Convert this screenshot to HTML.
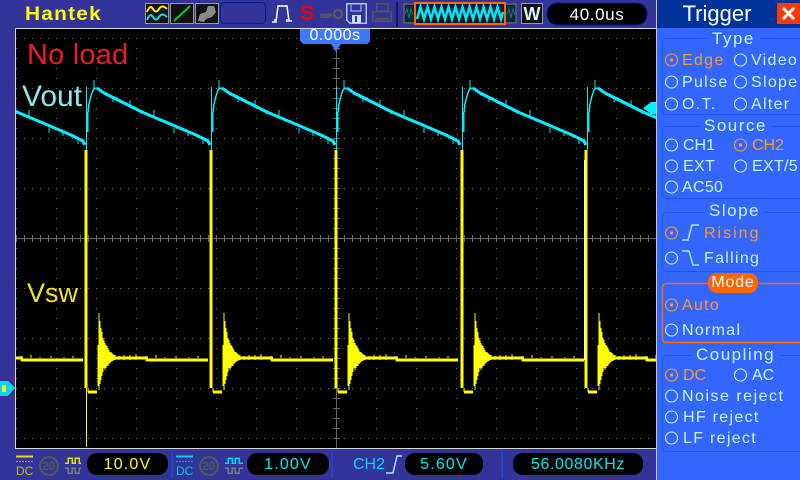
<!DOCTYPE html>
<html><head><meta charset="utf-8"><style>
html,body{margin:0;padding:0;background:#333399}
#r{position:relative;width:800px;height:480px;overflow:hidden;background:#333399;font-family:"Liberation Sans",sans-serif}
svg{position:absolute;left:0;top:0}
.t{position:absolute;white-space:nowrap;line-height:1}
.m{font-size:16px;color:#ccf2ff;letter-spacing:1.3px;margin-top:1px}
.o{color:#ff9a1f}
.l{font-size:17px;color:#ccf2ff;letter-spacing:1.5px;background:#3366ff;padding:0 5px}
.v{font-size:16px;letter-spacing:1.2px;text-align:center}
</style></head><body><div id="r">
<svg width="800" height="480" viewBox="0 0 800 480" shape-rendering="crispEdges">
<defs>
<clipPath id="c"><rect x="16" y="29" width="640" height="419"/></clipPath>
<pattern id="rows" x="16" y="38" width="8" height="50" patternUnits="userSpaceOnUse"><rect width="1" height="1" fill="#707070"/></pattern>
<pattern id="cols" x="16" y="28" width="40" height="10" patternUnits="userSpaceOnUse"><rect width="1" height="1" fill="#707070"/></pattern>
<pattern id="hticks" x="16" y="235" width="8" height="8" patternUnits="userSpaceOnUse"><rect width="1" height="7" fill="#666"/></pattern>
<pattern id="vticks" x="333" y="28" width="8" height="10" patternUnits="userSpaceOnUse"><rect width="7" height="1" fill="#666"/></pattern>
<g id="cy" fill="none" stroke="#00f0ff">
<path stroke-width="1" d="M.5 150V87"/>
<path stroke-width="2" d="M1.500 132V112"/>
<path stroke-width="1.500" d="M2 112L3 104L5 96L7 90L9 88H12"/>
<path stroke-width="3" d="M11 88L18 93L26 97L36 102L46 107L56 112L70 118L82 123L96 129L110 135L122 141L124 145"/>
<path stroke-width="1" d="M8 88V80M27 97V102M31 97V101M44 105V100M55 110V114M68 117V110M88 128V133M102 133V136M117 137V144"/>
</g>
<g id="ye" fill="none" stroke="#ffff00">
<path stroke-width="3" d="M0 150V388"/>
<path stroke-width="3" d="M2 392H11"/>
<path stroke-width="1" d="M2 388V392"/>
<path stroke-width="1" d="M12 386V345M13 390V313M14 384V321M15 380V328"/>
<path stroke-width="1" d="M16 376V332M17 372V338M18 368V340M19 370V343M20 368V345M21 366V346M22 366V348M23 364V350M24 363V352M25 362V352M26 361V353M27 361V354M28 360V355M29 360V355"/>
<path stroke-width="3" d="M29 358H62M60 360H122"/>
<path stroke-width="1" d="M33 356V360M38 355V360M44 355V360M50 354V360M60 356V361M70 355V358M79 357V358M90 356V358M103 357V358M112 356V358"/>
</g>
</defs>
<rect x="16" y="29" width="640" height="419" fill="#000"/>
<rect x="16" y="29" width="640" height="419" fill="url(#rows)"/>
<rect x="16" y="29" width="640" height="419" fill="url(#cols)"/>
<rect x="16" y="238" width="640" height="1" fill="#6c6c6c"/>
<rect x="336" y="29" width="1" height="419" fill="#6c6c6c"/>
<rect x="16" y="235" width="640" height="7" fill="url(#hticks)"/>
<rect x="333" y="29" width="7" height="419" fill="url(#vticks)"/>
<g clip-path="url(#c)">
<use href="#ye" x="-39"/><use href="#ye" x="86"/><use href="#ye" x="211"/><use href="#ye" x="336"/><use href="#ye" x="462"/><use href="#ye" x="586"/>
<path d="M86.500 388V447" stroke="#ffff00" stroke-width="1"/>
<path d="M584.500 160V360" stroke="#fff" stroke-width="1"/>
<use href="#cy" x="-39"/><use href="#cy" x="86"/><use href="#cy" x="211"/><use href="#cy" x="336"/><use href="#cy" x="462"/><use href="#cy" x="587"/>
</g>
<path d="M15.500 28.500H656.500M15.500 28.500V448.500H656.500" fill="none" stroke="#d8d8d8" stroke-width="1"/>
<rect x="656" y="0" width="144" height="480" fill="#3366ff"/>
<rect x="656" y="0" width="1" height="480" fill="#c8c8d8"/>
<rect x="657" y="0" width="143" height="28" fill="#003399"/>
<rect x="777" y="3" width="23" height="21" fill="#ff3a00"/>
<path d="M783 8L794 19M794 8L783 19" stroke="#fff" stroke-width="3" shape-rendering="auto"/>
<path d="M643 108L651 102H656V114H651Z" fill="#00f0ff"/>
<path d="M0 381H8L15 388L8 396H0Z" fill="#00d8f0"/>
<rect x="2" y="385" width="4" height="7" fill="#ffff00"/>
<g fill="none" stroke="#1a5ce0" stroke-width="1" shape-rendering="auto">
<rect x="662.500" y="38.500" width="160" height="76" rx="4"/>
<rect x="662.500" y="126.500" width="160" height="72" rx="4"/>
<rect x="662.500" y="212.500" width="160" height="59" rx="4"/>
<rect x="662.500" y="355.500" width="160" height="96" rx="4"/>
</g>
<rect x="662.500" y="283.500" width="160" height="59" rx="4" fill="none" stroke="#ff6a00" stroke-width="1.400" shape-rendering="auto"/>
<rect x="708" y="273" width="50" height="20" rx="9" fill="#ff6600" shape-rendering="auto"/>
<!-- top bar icons -->
<rect x="145.500" y="3.500" width="23" height="20" fill="#111" stroke="#999"/>
<path d="M147 12Q150 4 153 9T159 9T167 9" fill="none" stroke="#ffee00" stroke-width="2" shape-rendering="auto"/>
<path d="M147 20Q150 12 153 17T159 17T167 17" fill="none" stroke="#00e0ee" stroke-width="2" shape-rendering="auto"/>
<rect x="170.500" y="3.500" width="23" height="20" fill="#111" stroke="#999"/>
<path d="M174 21L190 6" stroke="#00d020" stroke-width="2" shape-rendering="auto"/>
<rect x="195.500" y="3.500" width="23" height="20" fill="#111" stroke="#999"/>
<path d="M198 21L200 14L206 12L208 6L214 6L216 12L212 17L206 19L204 22Z" fill="#8a8a8a" shape-rendering="auto"/>
<rect x="220.500" y="2.500" width="45" height="21" rx="4" fill="#333399" stroke="#0a1a9a" shape-rendering="auto"/>
<path d="M272 22H276L278 6H287L289 21H292M275 19V22M287 19V22" fill="none" stroke="#e8f4ff" stroke-width="1.600" shape-rendering="auto"/>
<path d="M279 5V7M282 5V7M285 5V7" stroke="#e8f4ff"/>
<path d="M320 15H332M322 15V18M325 15V18M328 15V18" stroke="#555" stroke-width="3"/>
<circle cx="338" cy="14" r="4" fill="none" stroke="#555" stroke-width="2.500" shape-rendering="auto"/>
<path d="M346.500 3.500H366V23H350L346.500 20Z" fill="#333399" stroke="#a8c8f0" stroke-width="1.500"/>
<rect x="351" y="4" width="10" height="7" fill="#333399" stroke="#a8c8f0"/>
<rect x="352" y="15" width="9" height="8" fill="#c8e0f8"/>
<rect x="355" y="16" width="2" height="6" fill="#333399"/>
<path d="M376.500 3.500H388V11H376.500ZM372.500 11.500H391V21H372.500ZM375 18.500H389" fill="none" stroke="#555" stroke-width="1.500"/>
<rect x="396" y="2" width="2" height="25" fill="#151560"/>
<rect x="403" y="3" width="114" height="21" fill="#556" />
<rect x="405" y="5" width="110" height="17" fill="#0a2a3a"/>
<rect x="415" y="3" width="90" height="21" fill="#0a1a2a" stroke="#ff6a00" stroke-width="2"/>
<path d="M417 19L420.500 7L424 19L427.500 7L431 19L434.500 7L438 19L441.500 7L445 19L448.500 7L452 19L455.500 7L459 19L462.500 7L466 19L469.500 7L473 19L476.500 7L480 19L483.500 7L487 19L490.500 7L494 19L497.500 7L501 19L503 12" fill="none" stroke="#00e8f8" stroke-width="2.500" shape-rendering="auto"/>
<path d="M405 14L407 9L409 18L411 9L413 15M507 14L509 9L511 18L513 9L515 15" fill="none" stroke="#0a7a80" stroke-width="1" shape-rendering="auto"/>
<rect x="521.500" y="3.500" width="21" height="20" fill="#111" stroke="#999"/>
<rect x="547" y="3" width="100" height="22" rx="10" fill="#000" stroke="#0a1a9a" shape-rendering="auto"/>
<!-- time marker -->
<path d="M300 29H370V41L367 44H341L336 52L331 44H303L300 41Z" fill="#3f78ff"/>
<!-- slope icons -->
<g fill="none" stroke-width="1.500" shape-rendering="auto">
<path d="M682 240H688L692 225H699" stroke="#a8e4ff"/>
<path d="M682 251H689L693 265H699" stroke="#a8e4ff"/>
<path d="M386 473H393L397 456H402" stroke="#a8e4ff"/>
</g>
<!-- radios -->
<g fill="none" stroke="#ccf2ff" stroke-width="1.100" shape-rendering="auto">
<circle cx="671.500" cy="82" r="6"/><circle cx="671.500" cy="104" r="6"/>
<circle cx="740.500" cy="60" r="6"/><circle cx="740.500" cy="82" r="6"/><circle cx="740.500" cy="104" r="6"/>
<circle cx="671.500" cy="145" r="6"/><circle cx="671.500" cy="166" r="6"/><circle cx="671.500" cy="187" r="6"/><circle cx="740.500" cy="166" r="6"/>
<circle cx="671.500" cy="258" r="6"/><circle cx="671.500" cy="330" r="6"/>
<circle cx="740.500" cy="375" r="6"/><circle cx="671.500" cy="396" r="6"/><circle cx="671.500" cy="417" r="6"/><circle cx="671.500" cy="438" r="6"/>
</g>
<g fill="none" stroke="#ff9a1f" stroke-width="1.100" shape-rendering="auto">
<circle cx="671.500" cy="60" r="6"/><circle cx="740.500" cy="145" r="6"/><circle cx="671.500" cy="233" r="6"/><circle cx="671.500" cy="305" r="6"/><circle cx="671.500" cy="375" r="6"/>
</g>
<g fill="#ff9a1f"><rect x="670" y="58.500" width="3" height="3"/><rect x="739" y="143.500" width="3" height="3"/><rect x="670" y="231.500" width="3" height="3"/><rect x="670" y="303.500" width="3" height="3"/><rect x="670" y="373.500" width="3" height="3"/></g>
<!-- bottom icons -->
<path d="M16 456.500H33" stroke="#e8e000" stroke-width="2"/>
<path d="M16 461.500H33" stroke="#a8a820" stroke-dasharray="2 1"/>
<circle cx="49" cy="466" r="9" fill="none" stroke="#555" stroke-width="2" shape-rendering="auto"/>
<path d="M65 463H68V458H72V463H75V458H79V463H81" fill="none" stroke="#e8e000" stroke-width="1.500"/>
<path d="M65 468H68V473H72V468H75V473H79V468H81" fill="none" stroke="#777" stroke-width="1.500"/>
<path d="M176 456.500H193" stroke="#00d8f0" stroke-width="2"/>
<path d="M176 461.500H193" stroke="#00b0c8" stroke-dasharray="2 1"/>
<circle cx="209" cy="466" r="9" fill="none" stroke="#555" stroke-width="2" shape-rendering="auto"/>
<path d="M225 463H228V458H232V463H235V458H239V463H243" fill="none" stroke="#00d8f0" stroke-width="1.500"/>
<path d="M225 468H228V473H232V468H235V473H239V468H243" fill="none" stroke="#777" stroke-width="1.500"/>
<g fill="#000" shape-rendering="auto">
<rect x="87" y="453" width="81" height="22" rx="10"/>
<rect x="247" y="453" width="82" height="22" rx="10"/>
<rect x="405" y="453" width="78" height="22" rx="10"/>
<rect x="513" y="453" width="130" height="22" rx="10"/>
</g>
<path d="M172 452V478M332 452V478M502 452V478" stroke="#1a4ae0" stroke-width="1.500"/>
</svg>

<div class="t" style="left:25px;top:5px;font-size:19px;font-weight:bold;color:#ffff00;letter-spacing:1.100px;transform:scaleX(1.1);transform-origin:left">Hantek</div>
<div class="t" style="left:300px;top:3px;font-size:21px;font-weight:bold;color:#f00000">S</div>
<div class="t" style="left:523px;top:5px;width:18px;text-align:center;font-size:18px;font-weight:bold;color:#d8f4f4">W</div>
<div class="t v" style="left:547px;top:6px;width:100px;color:#fff;font-size:17px;letter-spacing:.6px">40.0us</div>
<div class="t" style="left:27px;top:41px;font-size:29px;color:#ed1c24;letter-spacing:.2px">No load</div>
<div class="t" style="left:22px;top:82px;font-size:30px;color:#8ee9e6">Vout</div>
<div class="t" style="left:27px;top:280px;font-size:27px;color:#f2e11e">Vsw</div>
<div class="t" style="left:300px;top:28px;width:70px;text-align:center;font-size:16px;color:#fff;letter-spacing:.5px">0.000s</div>

<div class="t" style="left:657px;top:3px;width:120px;text-align:center;font-size:22px;color:#fff">Trigger</div>
<div class="t l" style="left:707px;top:30px">Type</div>
<div class="t l" style="left:699px;top:117px">Source</div>
<div class="t l" style="left:704px;top:202px">Slope</div>
<div class="t" style="left:708px;top:275px;width:50px;text-align:center;font-size:16px;color:#fff;letter-spacing:.8px">Mode</div>
<div class="t l" style="left:691px;top:346px">Coupling</div>

<div class="t m o" style="left:682px;top:52px">Edge</div>
<div class="t m" style="left:751px;top:52px">Video</div>
<div class="t m" style="left:682px;top:74px">Pulse</div>
<div class="t m" style="left:751px;top:74px">Slope</div>
<div class="t m" style="left:682px;top:96px">O.T.</div>
<div class="t m" style="left:751px;top:96px">Alter</div>
<div class="t m" style="left:683px;top:137px;letter-spacing:0">CH1</div>
<div class="t m o" style="left:752px;top:137px;letter-spacing:0">CH2</div>
<div class="t m" style="left:683px;top:158px;letter-spacing:.3px">EXT</div>
<div class="t m" style="left:752px;top:158px;letter-spacing:.3px">EXT/5</div>
<div class="t m" style="left:682px;top:179px;letter-spacing:.3px">AC50</div>
<div class="t m o" style="left:704px;top:225px;letter-spacing:2px">Rising</div>
<div class="t m" style="left:704px;top:250px;letter-spacing:1.300px">Falling</div>
<div class="t m o" style="left:682px;top:297px;letter-spacing:1.300px">Auto</div>
<div class="t m" style="left:682px;top:322px;letter-spacing:1.300px">Normal</div>
<div class="t m o" style="left:683px;top:367px;letter-spacing:0">DC</div>
<div class="t m" style="left:752px;top:367px;letter-spacing:0">AC</div>
<div class="t m" style="left:682px;top:388px;letter-spacing:1.500px">Noise reject</div>
<div class="t m" style="left:683px;top:409px;letter-spacing:1.300px">HF reject</div>
<div class="t m" style="left:683px;top:430px;letter-spacing:1.300px">LF reject</div>

<div class="t" style="left:16px;top:465px;font-size:12px;color:#b8b838">DC</div>
<div class="t" style="left:176px;top:465px;font-size:12px;color:#00c8d8">DC</div>
<div class="t" style="left:42px;top:460px;font-size:12px;font-weight:bold;color:#555">20</div>
<div class="t" style="left:202px;top:460px;font-size:12px;font-weight:bold;color:#555">20</div>
<div class="t v" style="left:87px;top:457px;width:81px;color:#ffff00">10.0V</div>
<div class="t v" style="left:247px;top:457px;width:82px;color:#00e8f8">1.00V</div>
<div class="t" style="left:353px;top:457px;font-size:16px;color:#00d8f0">CH2</div>
<div class="t v" style="left:405px;top:457px;width:78px;color:#00e8f8">5.60V</div>
<div class="t v" style="left:513px;top:457px;width:130px;color:#00e8f8;font-size:16px;letter-spacing:.6px">56.0080KHz</div>
</div></body></html>
